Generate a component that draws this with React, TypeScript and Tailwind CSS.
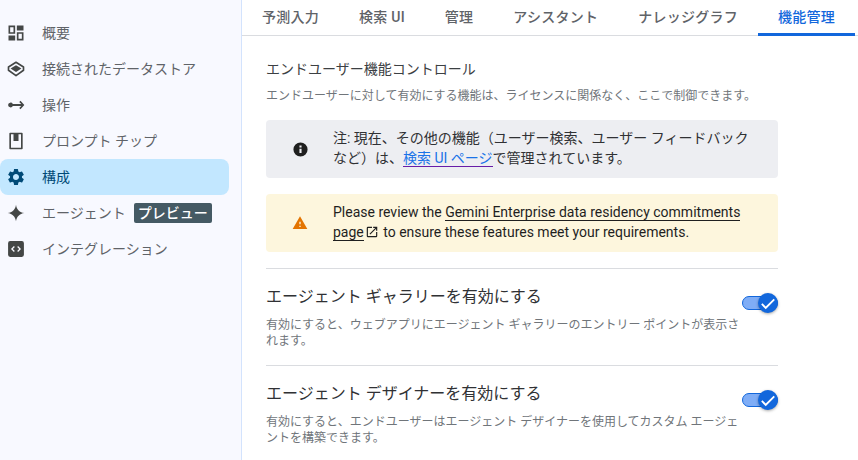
import React from "react";

const FONT = "font-['Roboto','Noto_Sans_CJK_JP',sans-serif]";

function Icon({ d, className }: { d: string; className: string }) {
  return (
    <svg viewBox="0 0 24 24" width="20" height="20" className={className} fill="currentColor" fillRule="evenodd">
      <path d={d} />
    </svg>
  );
}

const nav = [
  { label: "概要", custom: "dash" },
  { label: "接続されたデータストア", custom: "layers" },
  { label: "操作", custom: "arrow" },
  { label: "プロンプト チップ", custom: "book" },
  { label: "構成", custom: "gear", active: true },
  { label: "エージェント", custom: "spark", badge: "プレビュー" },
  { label: "インテグレーション", custom: "code" },
];

function NavIcon({ kind, active }: { kind: string; active?: boolean }) {
  const cls = active ? "text-[#004a77]" : "text-[#444746]";
  if (kind === "dash")
    return <Icon className={cls} d="M3 3h8v10H3V3zm2 2v6h4V5H5zm8-2h8v6h-8V3zm0 8h8v10h-8V11zm2 2v6h4v-6h-4zM3 15h8v6H3v-6z" />;
  if (kind === "layers")
    return (
      <svg viewBox="0 0 24 24" width="20" height="20" className={cls}>
        <path d="M12 4 3 9.500v4L12 20l9-6.500v-4L12 4z" fill="none" stroke="currentColor" strokeWidth="2" strokeLinejoin="round" />
        <path d="M12 7.500 18.500 11.500 12 15.500 5.500 11.500z" fill="currentColor" />
      </svg>
    );
  if (kind === "arrow")
    return <Icon className={cls} d="M2.500 12a3 3 0 0 1 5.700-1.200H18.300l-2.400-2.400 1.500-1.500 4.600 5.100-4.600 5.100-1.500-1.500 2.400-2.400H8.200A3 3 0 0 1 2.500 12z" />;
  if (kind === "book")
    return <Icon className={cls} d="M5 2h14a1 1 0 0 1 1 1v18a1 1 0 0 1-1 1H5a1 1 0 0 1-1-1V3a1 1 0 0 1 1-1zm1 2v16h12V4h-3v8H9V4H6z" />;
  if (kind === "gear")
    return <Icon className={cls} d="M19.140 12.940c.04-.3.060-.61.060-.94 0-.32-.020-.64-.070-.94l2.030-1.580a.49.49 0 0 0 .12-.61l-1.920-3.320a.488.488 0 0 0-.59-.22l-2.390.96c-.5-.38-1.030-.7-1.620-.94l-.36-2.540a.484.484 0 0 0-.48-.41h-3.840c-.24 0-.43.170-.47.41l-.36 2.540c-.59.240-1.130.570-1.620.94l-2.390-.96c-.22-.080-.47 0-.59.220L2.740 8.870c-.12.210-.080.470.12.610l2.030 1.580c-.05.300-.09.630-.09.940s.020.640.070.940l-2.030 1.580a.49.49 0 0 0-.12.610l1.920 3.320c.12.220.370.290.590.220l2.390-.96c.5.380 1.030.7 1.620.94l.36 2.540c.05.240.240.410.480.410h3.840c.24 0 .44-.170.470-.41l.36-2.540c.59-.240 1.130-.560 1.620-.94l2.390.96c.22.080.47 0 .59-.22l1.920-3.320c.12-.220.070-.470-.12-.610l-2.010-1.580zM12 15.600A3.610 3.610 0 0 1 8.400 12c0-1.980 1.620-3.600 3.600-3.600s3.600 1.620 3.600 3.600-1.620 3.600-3.600 3.600z" />;
  if (kind === "spark")
    return <Icon className={cls} d="M12 2c.7 5.600 4.400 9.300 10 10-5.600.7-9.300 4.400-10 10-.7-5.600-4.400-9.300-10-10 5.600-.7 9.300-4.400 10-10z" />;
  return <Icon className={cls} d="M5 2.500h14A2.500 2.500 0 0 1 21.500 5v14a2.500 2.500 0 0 1-2.500 2.500H5A2.500 2.500 0 0 1 2.500 19V5A2.500 2.500 0 0 1 5 2.500zm4.500 6L6 12l3.500 3.500 1.100-1.100L8.200 12l2.400-2.400-1.100-1.100zm5 0-1.100 1.100 2.400 2.400-2.400 2.400 1.100 1.100L18 12l-3.500-3.500z" />;
}

function Toggle() {
  return (
    <div className="relative w-9 h-[14px] rounded-full bg-[#7fadf6] border border-[#1267dc] shrink-0">
      <div className="absolute right-[-1px] top-[-4px] w-5 h-5 rounded-full bg-[#1267dc] shadow-[0_1px_3px_rgba(0,0,0,0.35)] flex items-center justify-center">
        <svg viewBox="0 0 24 24" width="18" height="18" fill="#fff">
          <path d="M9 16.800 4.600 12.400l-1.700 1.700L9 20.200 21.200 8l-1.700-1.700z" />
        </svg>
      </div>
    </div>
  );
}

function Setting({ title, children }: { title: string; children: React.ReactNode }) {
  return (
    <div className="border-t border-[#dadce0] pt-4 flex items-start justify-between h-[97px]">
      <div className="w-[476px]">
        <div className="text-[16px] leading-[24px] text-[#303134]">{title}</div>
        <div className="mt-2 text-[12px] leading-[16px] text-[#70757a]">{children}</div>
      </div>
      <div className="mt-[11px]">
        <Toggle />
      </div>
    </div>
  );
}

export default function App() {
  const tabs = ["予測入力", "検索 UI", "管理", "アシスタント", "ナレッジグラフ", "機能管理"];
  return (
    <div className={`${FONT} w-[858px] h-[460px] overflow-hidden flex bg-white`}>
      <aside className="w-[242px] shrink-0 h-full bg-[#f8f9ff] border-r border-[#d3e3fd] pt-[15px] pr-3">
        {nav.map((n) => (
          <div
            key={n.label}
            className={`h-9 flex items-center pl-[6px] rounded-lg text-[14px] ${
              n.active ? "bg-[#c2e7ff] text-[#004a77]" : "text-[#5f6368]"
            }`}
          >
            <NavIcon kind={n.custom} active={n.active} />
            <span className="ml-4">{n.label}</span>
            {n.badge && (
              <span className="ml-2 bg-[#455a64] text-white text-[14px] leading-[20px] px-1 rounded-[2px] font-medium">
                {n.badge}
              </span>
            )}
          </div>
        ))}
      </aside>
      <main className="flex-1 min-w-0">
        <div className="h-9 flex border-b border-[#dadce0]">
          {tabs.map((t, i) => (
            <div
              key={t}
              className={`px-5 h-9 leading-[34px] text-[14px] tracking-[0.25px] font-medium ${
                i === 5 ? "text-[#1267dc] border-b-[3px] border-[#1267dc]" : "text-[#5f6368]"
              }`}
            >
              {t}
            </div>
          ))}
        </div>
        <div className="ml-6 w-[512px] pt-[21px]">
          <div className="text-[14px] leading-[24px] text-[#3c4043]">エンドユーザー機能コントロール</div>
          <div className="mt-[7px] text-[12px] leading-[16px] text-[#70757a]">
            エンドユーザーに対して有効にする機能は、ライセンスに関係なく、ここで制御できます。
          </div>
          <div className="mt-4 h-[58px] bg-[#edeef2] rounded-[4px] flex items-center">
            <svg viewBox="0 0 24 24" width="17" height="17" fill="#1f1f1f" className="ml-[26px] shrink-0">
              <path d="M12 2a10 10 0 1 0 0 20 10 10 0 0 0 0-20zm1.500 15h-3v-6h3v6zm0-8h-3V6.500h3V9z" />
            </svg>
            <div className="ml-6 text-[14px] leading-[20px] text-[#303134] -translate-y-px">
              注: 現在、その他の機能（ユーザー検索、ユーザー フィードバック
              <br />
              など）は、<span className="text-[#1a73e8] border-b border-[#681da8]">検索 UI ページ</span>で管理されています。
            </div>
          </div>
          <div className="mt-4 h-[58px] bg-[#fdf6dd] rounded-[4px] flex items-center">
            <svg viewBox="0 0 24 24" width="16" height="16" fill="#e37400" className="ml-[26px] shrink-0">
              <path d="M1 21h22L12 2 1 21zm12-3h-2v-2h2v2zm0-4h-2v-4h2v4z" />
            </svg>
            <div className="ml-[25px] text-[14px] leading-[20px] text-[#1f1f1f] -translate-y-px">
              Please review the <span className="border-b border-[#1f1f1f]">Gemini Enterprise data residency commitments</span>
              <br />
              <span className="border-b border-[#1f1f1f]">page</span>
              <svg viewBox="0 0 24 24" width="14" height="14" fill="#1f1f1f" className="inline mx-[1px] align-[-2px]">
                <path d="M19 19H5V5h7V3H5a2 2 0 0 0-2 2v14a2 2 0 0 0 2 2h14a2 2 0 0 0 2-2v-7h-2v7zM14 3v2h3.590l-9.830 9.830 1.410 1.410L19 6.410V10h2V3h-7z" />
              </svg>{" "}
              to ensure these features meet your requirements.
            </div>
          </div>
          <div className="mt-4">
            <Setting title="エージェント ギャラリーを有効にする">
              有効にすると、ウェブアプリにエージェント ギャラリーのエントリー ポイントが表示されます。
            </Setting>
            <Setting title="エージェント デザイナーを有効にする">
              有効にすると、エンドユーザーはエージェント デザイナーを使用してカスタム エージェントを構築できます。
            </Setting>
          </div>
        </div>
      </main>
    </div>
  );
}
